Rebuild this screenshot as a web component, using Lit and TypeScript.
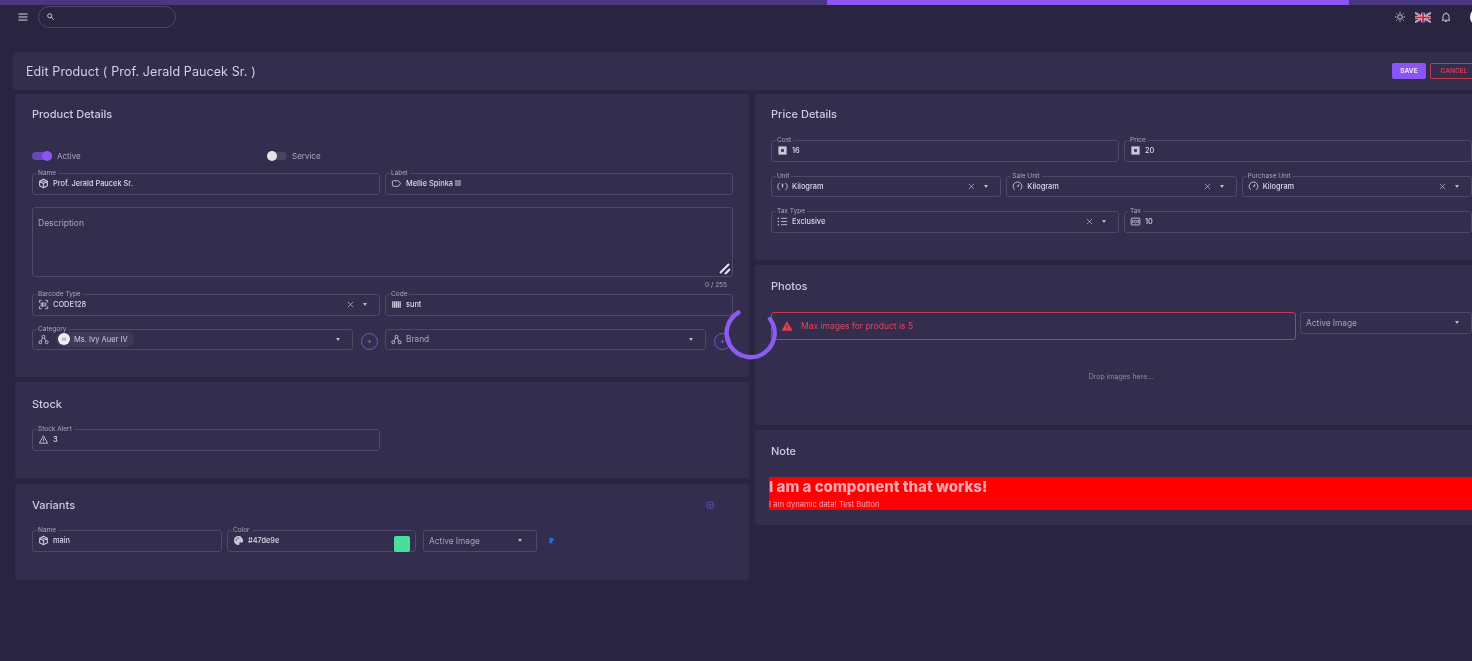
import { html, css, LitElement, svg, nothing, SVGTemplateResult, TemplateResult } from 'lit';
import { customElement } from 'lit/decorators.js';

const icons: Record<string, SVGTemplateResult> = {
  menu: svg`<path d="M3 6h18M3 12h18M3 18h18" fill="none" stroke="currentColor" stroke-width="2"/>`,
  search: svg`<circle cx="10" cy="10" r="5.5" fill="none" stroke="currentColor" stroke-width="2.4"/><path d="M14 14l6.5 6.5" stroke="currentColor" stroke-width="2.6"/>`,
  sun: svg`<circle cx="12" cy="12" r="4.5" fill="none" stroke="currentColor" stroke-width="1.8"/><path d="M12 2v3M12 19v3M2 12h3M19 12h3M5 5l2 2M17 17l2 2M5 19l2-2M17 7l2-2" stroke="currentColor" stroke-width="1.8"/>`,
  bell: svg`<path d="M6 17V11a6 6 0 0 1 12 0v6l2 1.5H4zM10 21h4M12 3v2" fill="none" stroke="currentColor" stroke-width="1.8" stroke-linejoin="round"/>`,
  box: svg`<path d="M12 2.5l8.500 4.700v9.600L12 21.500l-8.500-4.700V7.200zM3.500 7.200l8.500 4.800 8.500-4.800M12 12v9.500M7.700 4.800l8.600 4.800" fill="none" stroke="currentColor" stroke-width="2.400" stroke-linejoin="round"/>`,
  label: svg`<path d="M5 6h11l5 6-5 6H5a2 2 0 0 1-2-2V8a2 2 0 0 1 2-2z" fill="none" stroke="currentColor" stroke-width="2"/>`,
  scan: svg`<path d="M3 8V3h5M16 3h5v5M3 16v5h5M21 16v5h-5" fill="none" stroke="currentColor" stroke-width="2"/><path d="M7 7v10M10 7v10M13 7v10M17 7v10" stroke="currentColor" stroke-width="2"/>`,
  bars: svg`<path d="M4 5v14M8 5v14M12 5v14M16 5v14M20 5v14" stroke="currentColor" stroke-width="3"/>`,
  tree: svg`<circle cx="12" cy="6" r="3.200" fill="none" stroke="currentColor" stroke-width="2"/><circle cx="5" cy="18" r="3.200" fill="none" stroke="currentColor" stroke-width="2"/><circle cx="19" cy="18" r="3.200" fill="none" stroke="currentColor" stroke-width="2"/><path d="M10 9l-3.500 6M14 9l3.500 6" stroke="currentColor" stroke-width="2"/>`,
  warn: svg`<path d="M12 4l9 16H3zM12 10v5M12 17v1.500" fill="none" stroke="currentColor" stroke-width="2"/>`,
  palette: svg`<path d="M12 2a10 10 0 0 0 0 20c1.600 0 2.500-1.200 2-2.500-.6-1.500.3-3 2-3h3c1.800 0 3-1.300 3-3.500C22 6.500 17.500 2 12 2z" fill="currentColor"/><circle cx="7" cy="11" r="1.600" fill="#332e4d"/><circle cx="11" cy="7" r="1.600" fill="#332e4d"/>`,
  money: svg`<path d="M3 3h18v18H3z" fill="currentColor"/><path d="M9 9h6v6H9z" fill="#332e4d"/>`,
  gauge: svg`<path d="M6 19a9.500 9.500 0 1 1 12 0" fill="none" stroke="currentColor" stroke-width="2"/><path d="M12 13l3.500-5" stroke="currentColor" stroke-width="2.400"/>`,
  unit: svg`<path d="M6 20a9.500 9.500 0 0 1 0-16M18 4a9.500 9.500 0 0 1 0 16" fill="none" stroke="currentColor" stroke-width="2"/><path d="M12 6v8" stroke="currentColor" stroke-width="3"/>`,
  list: svg`<path d="M9 5h13M9 12h13M9 19h13" stroke="currentColor" stroke-width="2"/><path d="M3 3.500v3M3 10.500v3M3 17.500v3" stroke="currentColor" stroke-width="2.500"/>`,
  cash: svg`<rect x="2.500" y="4.500" width="19" height="15" rx="2" fill="none" stroke="currentColor" stroke-width="2"/><circle cx="12" cy="12" r="3" fill="none" stroke="currentColor" stroke-width="2"/><path d="M6 8v8M18 8v8" stroke="currentColor" stroke-width="2"/>`,
  close: svg`<path d="M5 5l14 14M19 5L5 19" stroke="currentColor" stroke-width="1.800"/>`,
  plus: svg`<path d="M12 7v10M7 12h10" stroke="currentColor" stroke-width="2.500"/>`,
  addBox: svg`<rect x="3" y="3" width="18" height="18" rx="2" fill="none" stroke="currentColor" stroke-width="3"/><path d="M12 8v8M8 12h8" stroke="currentColor" stroke-width="3"/>`,
  save: svg`<path d="M4 2h9l7 8-7 2v9l-4-3-5 3z" fill="currentColor"/>`,
  alert: svg`<path d="M12 2.500L23 21.500H1zM11 9.500v6h2v-6zM11 17v2h2v-2z" fill="currentColor" fill-rule="evenodd"/>`,
};

const icon = (name: string, cls = '') =>
  html`<svg class="ic ${cls}" viewBox="0 0 24 24">${icons[name]}</svg>`;

interface FieldOptions {
  label?: string;
  value?: string;
  icon?: string;
  clear?: boolean;
  select?: boolean;
  muted?: boolean;
  slot?: TemplateResult;
}

@customElement('app-root')
export class AppRoot extends LitElement {
  field(o: FieldOptions) {
    return html`<div class="field">
      ${o.label ? html`<span class="flabel">${o.label}</span>` : nothing}
      ${o.icon ? html`<span class="fic">${icon(o.icon)}</span>` : nothing}
      ${o.slot ?? nothing}
      <span class="fval ${o.muted ? 'muted' : ''}">${o.value ?? ''}</span>
      ${o.clear ? html`<span class="clear">${icon('close')}</span>` : nothing}
      ${o.select ? html`<span class="caret"></span>` : nothing}
    </div>`;
  }

  toggle(label: string, on: boolean) {
    return html`<div class="toggle ${on ? 'on' : ''}">
      <span class="track"><span class="thumb"></span></span>${label}
    </div>`;
  }

  addBtn() {
    return html`<span class="add">${icon('plus')}</span>`;
  }

  render() {
    return html`
      <div class="progress"><span class="fill"></span></div>
      <header class="toolbar">
        <span class="menu">${icon('menu')}</span>
        <div class="search">${icon('search')}</div>
        <span class="grow"></span>
        <span class="tool">${icon('sun')}</span>
        <svg class="flag" viewBox="0 0 60 36">
          <rect width="60" height="36" fill="#2b2f7d"/>
          <path d="M0 0l60 36M60 0L0 36" stroke="#e8e4ef" stroke-width="7"/>
          <path d="M0 0l60 36M60 0L0 36" stroke="#c8283c" stroke-width="2.500"/>
          <path d="M30 0v36M0 18h60" stroke="#e8e4ef" stroke-width="12"/>
          <path d="M30 0v36M0 18h60" stroke="#c8283c" stroke-width="7"/>
        </svg>
        <span class="tool">${icon('bell')}</span>
        <span class="avatar"></span>
      </header>

      <div class="titlebar">
        <h1>Edit Product ( Prof. Jerald Paucek Sr. )</h1>
        <span class="grow"></span>
        <button class="btn save">SAVE</button>
        <button class="btn cancel">CANCEL</button>
      </div>

      <main class="columns">
        <div class="col left">
          <section class="card details">
            <h2>Product Details</h2>
            <div class="toggles">
              ${this.toggle('Active', true)} ${this.toggle('Service', false)}
            </div>
            <div class="two">
              ${this.field({ label: 'Name', value: 'Prof. Jerald Paucek Sr.', icon: 'box' })}
              ${this.field({ label: 'Label', value: 'Mellie Spinka III', icon: 'label' })}
            </div>
            <div class="desc">
              <span>Description</span>
              <svg class="resize" viewBox="0 0 14 14">
                <path d="M2 11L11 2M7 12l5-5" stroke="#e6e4ee" stroke-width="2"/>
              </svg>
            </div>
            <div class="counter">0 / 255</div>
            <div class="two">
              ${this.field({ label: 'Barcode Type', value: 'CODE128', icon: 'scan', clear: true, select: true })}
              ${this.field({ label: 'Code', value: 'sunt', icon: 'bars' })}
            </div>
            <div class="two cats">
              <div class="with-add">
                ${this.field({
                  label: 'Category',
                  icon: 'tree',
                  select: true,
                  slot: html`<span class="chip"><span class="chip-av">M</span>Ms. Ivy Auer IV</span>`,
                })}
                ${this.addBtn()}
              </div>
              <div class="with-add">
                ${this.field({ value: 'Brand', icon: 'tree', select: true, muted: true })}
                ${this.addBtn()}
              </div>
            </div>
          </section>

          <section class="card stock">
            <h2>Stock</h2>
            <div class="two">${this.field({ label: 'Stock Alert', value: '3', icon: 'warn' })}</div>
          </section>

          <section class="card variants">
            <div class="head">
              <h2>Variants</h2>
              <span class="addbox">${icon('addBox')}</span>
            </div>
            <div class="variant">
              ${this.field({ label: 'Name', value: 'main', icon: 'box' })}
              <div class="color">
                ${this.field({ label: 'Color', value: '#47de9e', icon: 'palette' })}
                <span class="swatch"></span>
              </div>
              ${this.field({ value: 'Active Image', select: true, muted: true })}
              <span class="savebtn">${icon('save')}</span>
            </div>
          </section>
        </div>

        <div class="col right">
          <section class="card price">
            <h2>Price Details</h2>
            <div class="rows">
              <div class="two">
                ${this.field({ label: 'Cost', value: '16', icon: 'money' })}
                ${this.field({ label: 'Price', value: '20', icon: 'money' })}
              </div>
              <div class="three">
                ${this.field({ label: 'Unit', value: 'Kilogram', icon: 'unit', clear: true, select: true })}
                ${this.field({ label: 'Sale Unit', value: 'Kilogram', icon: 'gauge', clear: true, select: true })}
                ${this.field({ label: 'Purchase Unit', value: 'Kilogram', icon: 'gauge', clear: true, select: true })}
              </div>
              <div class="two">
                ${this.field({ label: 'Tax Type', value: 'Exclusive', icon: 'list', clear: true, select: true })}
                ${this.field({ label: 'Tax', value: '10', icon: 'cash' })}
              </div>
            </div>
          </section>

          <section class="card photos">
            <h2>Photos</h2>
            <div class="photo-row">
              <div class="alert">${icon('alert')}<span>Max images for product is 5</span></div>
              ${this.field({ value: 'Active Image', select: true, muted: true })}
            </div>
            <div class="drop">Drop images here...</div>
          </section>

          <section class="card note">
            <h2>Note</h2>
            <div class="red">
              <strong>I am a component that works!</strong>
              <small>I am dynamic data! Test Button</small>
            </div>
          </section>
        </div>
      </main>

      <svg class="spinner" viewBox="0 0 54 54">
        <path d="M14.500 6.500A24 24 0 1 0 46 13" fill="none" stroke="#8a5cf0" stroke-width="4.400" stroke-linecap="round"/>
      </svg>
    `;
  }

  static styles = css`
    :host {
      display: block;
      position: relative;
      width: 1472px;
      height: 661px;
      overflow: hidden;
      background: #292540;
      color: #d6d2e6;
      font-family: Inter, 'Liberation Sans', sans-serif;
      font-size: 7.5px;
      filter: blur(0.5px);
    }

    * {
      box-sizing: border-box;
    }

    .grow {
      flex: 1;
    }

    .ic {
      display: block;
      width: 100%;
      height: 100%;
    }

    .progress {
      height: 5px;
      background: #4a3782;
      padding-left: 827px;
    }

    .fill {
      display: block;
      width: 522px;
      height: 100%;
      background: #8b55f5;
    }

    .toolbar {
      display: flex;
      align-items: center;
      height: 24px;
      padding-left: 17px;
      color: #d8d5e4;
    }

    .menu {
      width: 12px;
      height: 12px;
    }

    .search {
      width: 138px;
      height: 22px;
      margin-left: 9px;
      padding: 5px 7px;
      border: 1px solid #4b4661;
      border-radius: 11px;
    }

    .search .ic {
      width: 9px;
      height: 9px;
    }

    .tool {
      width: 12px;
      height: 12px;
    }

    .flag {
      width: 16px;
      height: 11px;
      margin: 0 9px;
    }

    .avatar {
      width: 10px;
      height: 14px;
      margin: 0 -8px 0 18px;
      border-radius: 50%;
      background: #f4f3f7;
    }

    .titlebar {
      display: flex;
      align-items: center;
      gap: 4px;
      width: 1465px;
      height: 38px;
      margin: 23px 0 0 13px;
      padding: 0 0 0 13px;
      background: #332e4d;
      border-radius: 3px 0 0 3px;
    }

    h1 {
      margin: 0;
      font-size: 12.5px;
      font-weight: 400;
      letter-spacing: 0.1px;
      color: #d3cfe5;
    }

    .btn {
      height: 16px;
      padding: 0;
      border-radius: 2px;
      font: 700 6.5px Inter, sans-serif;
    }

    .save {
      width: 34px;
      border: 0;
      background: #8b55f5;
      color: #efe9ff;
    }

    .cancel {
      width: 48px;
      background: transparent;
      border: 1px solid #c23a50;
      color: #d33a50;
    }

    .columns {
      display: grid;
      grid-template-columns: 734px 725px;
      gap: 6px;
      margin: 4px 0 0 15px;
    }

    .col {
      display: flex;
      flex-direction: column;
      gap: 5px;
    }

    .card {
      padding: 12px 16px 27px 17px;
      background: #332e4d;
      border-radius: 3px;
    }

    .right .card {
      padding-left: 16px;
    }

    h2 {
      margin: 0;
      font-size: 11px;
      line-height: 16px;
      font-weight: 500;
      color: #cfcbe2;
    }

    .two {
      display: grid;
      grid-template-columns: 1fr 1fr;
      gap: 5px;
    }

    .three {
      display: grid;
      grid-template-columns: repeat(3, 1fr);
      gap: 5px;
    }

    .field {
      position: relative;
      display: flex;
      align-items: center;
      min-width: 0;
      height: 21.5px;
      padding: 0 8px 0 5px;
      border: 1px solid #4f4969;
      border-radius: 3px;
    }

    .flabel {
      position: absolute;
      top: -5px;
      left: 4px;
      padding: 0 2px 0 1px;
      background: #332e4d;
      font-size: 6.5px;
      line-height: 8px;
      color: #a9a5c2;
    }

    .fic {
      flex: none;
      width: 11px;
      height: 11px;
      margin-right: 4px;
      color: #c9c6d8;
    }

    .fval {
      flex: 1;
      white-space: nowrap;
      font-size: 7.4px;
      font-weight: 500;
      color: #dcd8ec;
    }

    .fval.muted {
      color: #a5a1bd;
      font-size: 8.3px;
      font-weight: 400;
    }

    .clear {
      flex: none;
      width: 9px;
      height: 9px;
      margin-right: 8px;
      color: #c9c6d8;
    }

    .caret {
      flex: none;
      width: 0;
      height: 0;
      margin-right: 4px;
      border: 2.5px solid transparent;
      border-top: 3px solid #bdb9cf;
      border-bottom: 0;
    }

    .toggles {
      display: grid;
      grid-template-columns: 235px 1fr;
      margin: 28px 0 11px;
    }

    .toggle {
      display: flex;
      align-items: center;
      gap: 5px;
      height: 12px;
      font-size: 8px;
      color: #a9a5c2;
    }

    .track {
      position: relative;
      width: 20px;
      height: 8px;
      border-radius: 4px;
      background: #4a4560;
    }

    .on .track {
      background: #6a48b8;
    }

    .thumb {
      position: absolute;
      top: -1px;
      left: 0;
      width: 10px;
      height: 10px;
      border-radius: 50%;
      background: #e6e5ea;
    }

    .on .thumb {
      left: 10px;
      background: #8b55f5;
    }

    .desc {
      position: relative;
      height: 70px;
      margin-top: 12.5px;
      padding: 10px 5px;
      border: 1px solid #4f4969;
      border-radius: 3px;
      font-size: 8.5px;
      color: #a9a5c2;
    }

    .resize {
      position: absolute;
      right: 0;
      bottom: 0;
      width: 14px;
      height: 14px;
    }

    .counter {
      height: 17px;
      padding: 4px 6px 0 0;
      text-align: right;
      font-size: 6.5px;
      color: #a9a5c2;
    }

    .cats {
      margin-top: 13px;
    }

    .with-add {
      display: flex;
      align-items: center;
      gap: 8px;
      padding-right: 2.5px;
    }

    .with-add .field {
      flex: 1;
    }

    .add {
      flex: none;
      width: 17px;
      height: 17px;
      margin-top: 4px;
      padding: 3px;
      border: 1px solid #7a4fe0;
      border-radius: 50%;
      color: #7a4fe0;
    }

    .chip {
      display: flex;
      align-items: center;
      gap: 4px;
      height: 15px;
      margin-left: 3px;
      padding: 0 6px 0 2px;
      border-radius: 8px;
      background: #3f3a58;
      white-space: nowrap;
      color: #cfcbe2;
    }

    .chip-av {
      display: grid;
      place-items: center;
      width: 12px;
      height: 12px;
      border-radius: 50%;
      background: #efeef3;
      color: #8a8798;
      font-size: 5px;
    }

    .stock {
      padding-top: 14px;
      padding-bottom: 27.5px;
    }

    .stock .two {
      margin-top: 17px;
    }

    .variants {
      margin-top: 1px;
      padding-top: 13px;
      padding-bottom: 28.5px;
    }

    .head {
      display: flex;
      align-items: center;
      justify-content: space-between;
      padding-right: 19px;
    }

    .addbox {
      width: 8px;
      height: 8px;
      color: #6d45c9;
    }

    .variant {
      display: grid;
      grid-template-columns: 190px 191px 114px 14px;
      gap: 5px;
      align-items: center;
      margin-top: 17px;
    }

    .color {
      position: relative;
      padding-right: 2px;
    }

    .swatch {
      position: absolute;
      right: 8px;
      bottom: 0;
      width: 16px;
      height: 16px;
      border-radius: 2px;
      background: #47de9e;
    }

    .variant .caret {
      margin-right: 6px;
    }

    .savebtn {
      width: 8px;
      height: 10px;
      margin-left: 6px;
      color: #2a68e0;
    }

    .rows {
      display: flex;
      flex-direction: column;
      gap: 14px;
      margin-top: 18px;
      width: 701px;
    }

    .price {
      padding-bottom: 27.5px;
    }

    .photos {
      height: 160px;
      padding-top: 13px;
    }

    .photo-row {
      display: grid;
      grid-template-columns: 525px 172px;
      gap: 4px;
      align-items: start;
      margin-top: 18px;
    }

    .alert {
      display: flex;
      align-items: center;
      gap: 8px;
      height: 28px;
      padding-left: 9px;
      border: 1px solid #c8374e;
      border-radius: 3px;
      font-size: 8.5px;
      color: #e2445a;
    }

    .alert .ic {
      width: 12px;
      height: 12px;
      color: #e8404f;
    }

    .drop {
      height: 59px;
      padding-top: 32px;
      width: 700px;
      text-align: center;
      font-size: 7px;
      color: #8f8ba8;
    }

    .right .note {
      padding: 13px 0 15px 14px;
    }

    .note h2 {
      padding-left: 2px;
    }

    .red {
      display: flex;
      flex-direction: column;
      height: 33px;
      margin-top: 18px;
      background: #fe0000;
      color: #f7a6b4;
    }

    .red strong {
      font-size: 15px;
      line-height: 20px;
      font-weight: 800;
    }

    .red small {
      font-size: 7.6px;
      line-height: 15px;
    }

    .spinner {
      position: absolute;
      left: 724px;
      top: 306px;
      width: 54px;
      height: 54px;
    }
  `;
}
